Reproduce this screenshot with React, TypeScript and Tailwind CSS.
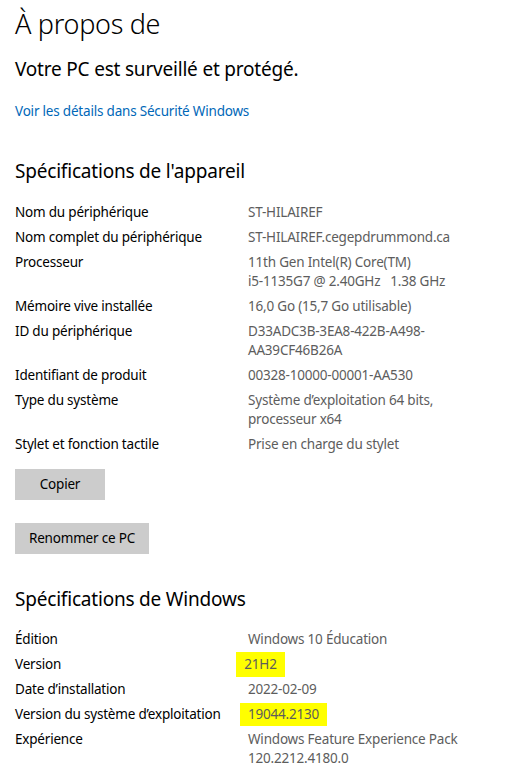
const device: [string, string[]][] = [
  ["Nom du périphérique", ["ST-HILAIREF"]],
  ["Nom complet du périphérique", ["ST-HILAIREF.cegepdrummond.ca"]],
  ["Processeur", ["11th Gen Intel(R) Core(TM)", "i5-1135G7 @ 2.40GHz   1.38 GHz"]],
  ["Mémoire vive installée", ["16,0 Go (15,7 Go utilisable)"]],
  ["ID du périphérique", ["D33ADC3B-3EA8-422B-A498-", "AA39CF46B26A"]],
  ["Identifiant de produit", ["00328-10000-00001-AA530"]],
  ["Type du système", ["Système d’exploitation 64 bits,", "processeur x64"]],
  ["Stylet et fonction tactile", ["Prise en charge du stylet"]],
];

const Row = ({ label, lines }: { label: string; lines: string[] }) => (
  <div className="flex">
    <div className="w-[233px] shrink-0 text-black">{label}</div>
    <div className="text-[#5d5d5d] whitespace-pre">
      {lines.map((l) => (
        <div key={l}>{l}</div>
      ))}
    </div>
  </div>
);

const App = () => {
  return (
    <div
      className="min-h-screen bg-white pl-[15px] pt-[4px] text-[13.5px] leading-[19px] tracking-[-0.2px] text-black"
      style={{ fontFamily: '"Segoe UI", "Noto Sans", sans-serif' }}
    >
      <h1 className="text-[27px] leading-[40px] font-light tracking-[-0.3px]">À propos de</h1>
      <p className="mt-[11px] text-[19px] leading-[28px]">Votre PC est surveillé et protégé.</p>
      <a className="mt-[19px] block text-[#0067b8]">Voir les détails dans Sécurité Windows</a>

      <h2 className="mt-[36px] text-[19px] leading-[28px]">Spécifications de l'appareil</h2>
      <div className="mt-[18px] flex flex-col gap-[6px]">
        {device.map(([l, v]) => (
          <Row key={l} label={l} lines={v} />
        ))}
      </div>

      <div className="mt-[15px] flex flex-col items-start gap-[23px]">
        <button className="h-[31px] w-[90px] bg-[#cccccc] text-black">Copier</button>
        <button className="h-[31px] w-[134px] bg-[#cccccc] text-black">Renommer ce PC</button>
      </div>

      <h2 className="mt-[31px] text-[19px] leading-[28px]">Spécifications de Windows</h2>
      <div className="mt-[17px] flex flex-col gap-[6px]">
        <Row label="Édition" lines={["Windows 10 Éducation"]} />
        <div className="flex">
          <div className="w-[221px] shrink-0">Version</div>
          <div className="-my-[3px] flex h-[25px] w-[49px] items-center justify-center bg-[#ffff00] text-[#5d5d5d]">
            21H2
          </div>
        </div>
        <Row label="Date d’installation" lines={["2022-02-09"]} />
        <div className="flex items-center">
          <div className="w-[225px] shrink-0 whitespace-nowrap">Version du système d’exploitation</div>
          <div className="-my-[2px] flex h-[23px] w-[87px] items-center justify-center bg-[#ffff00] text-[#5d5d5d]">
            19044.2130
          </div>
        </div>
        <Row label="Expérience" lines={["Windows Feature Experience Pack", "120.2212.4180.0"]} />
      </div>
    </div>
  );
};

export default App;
